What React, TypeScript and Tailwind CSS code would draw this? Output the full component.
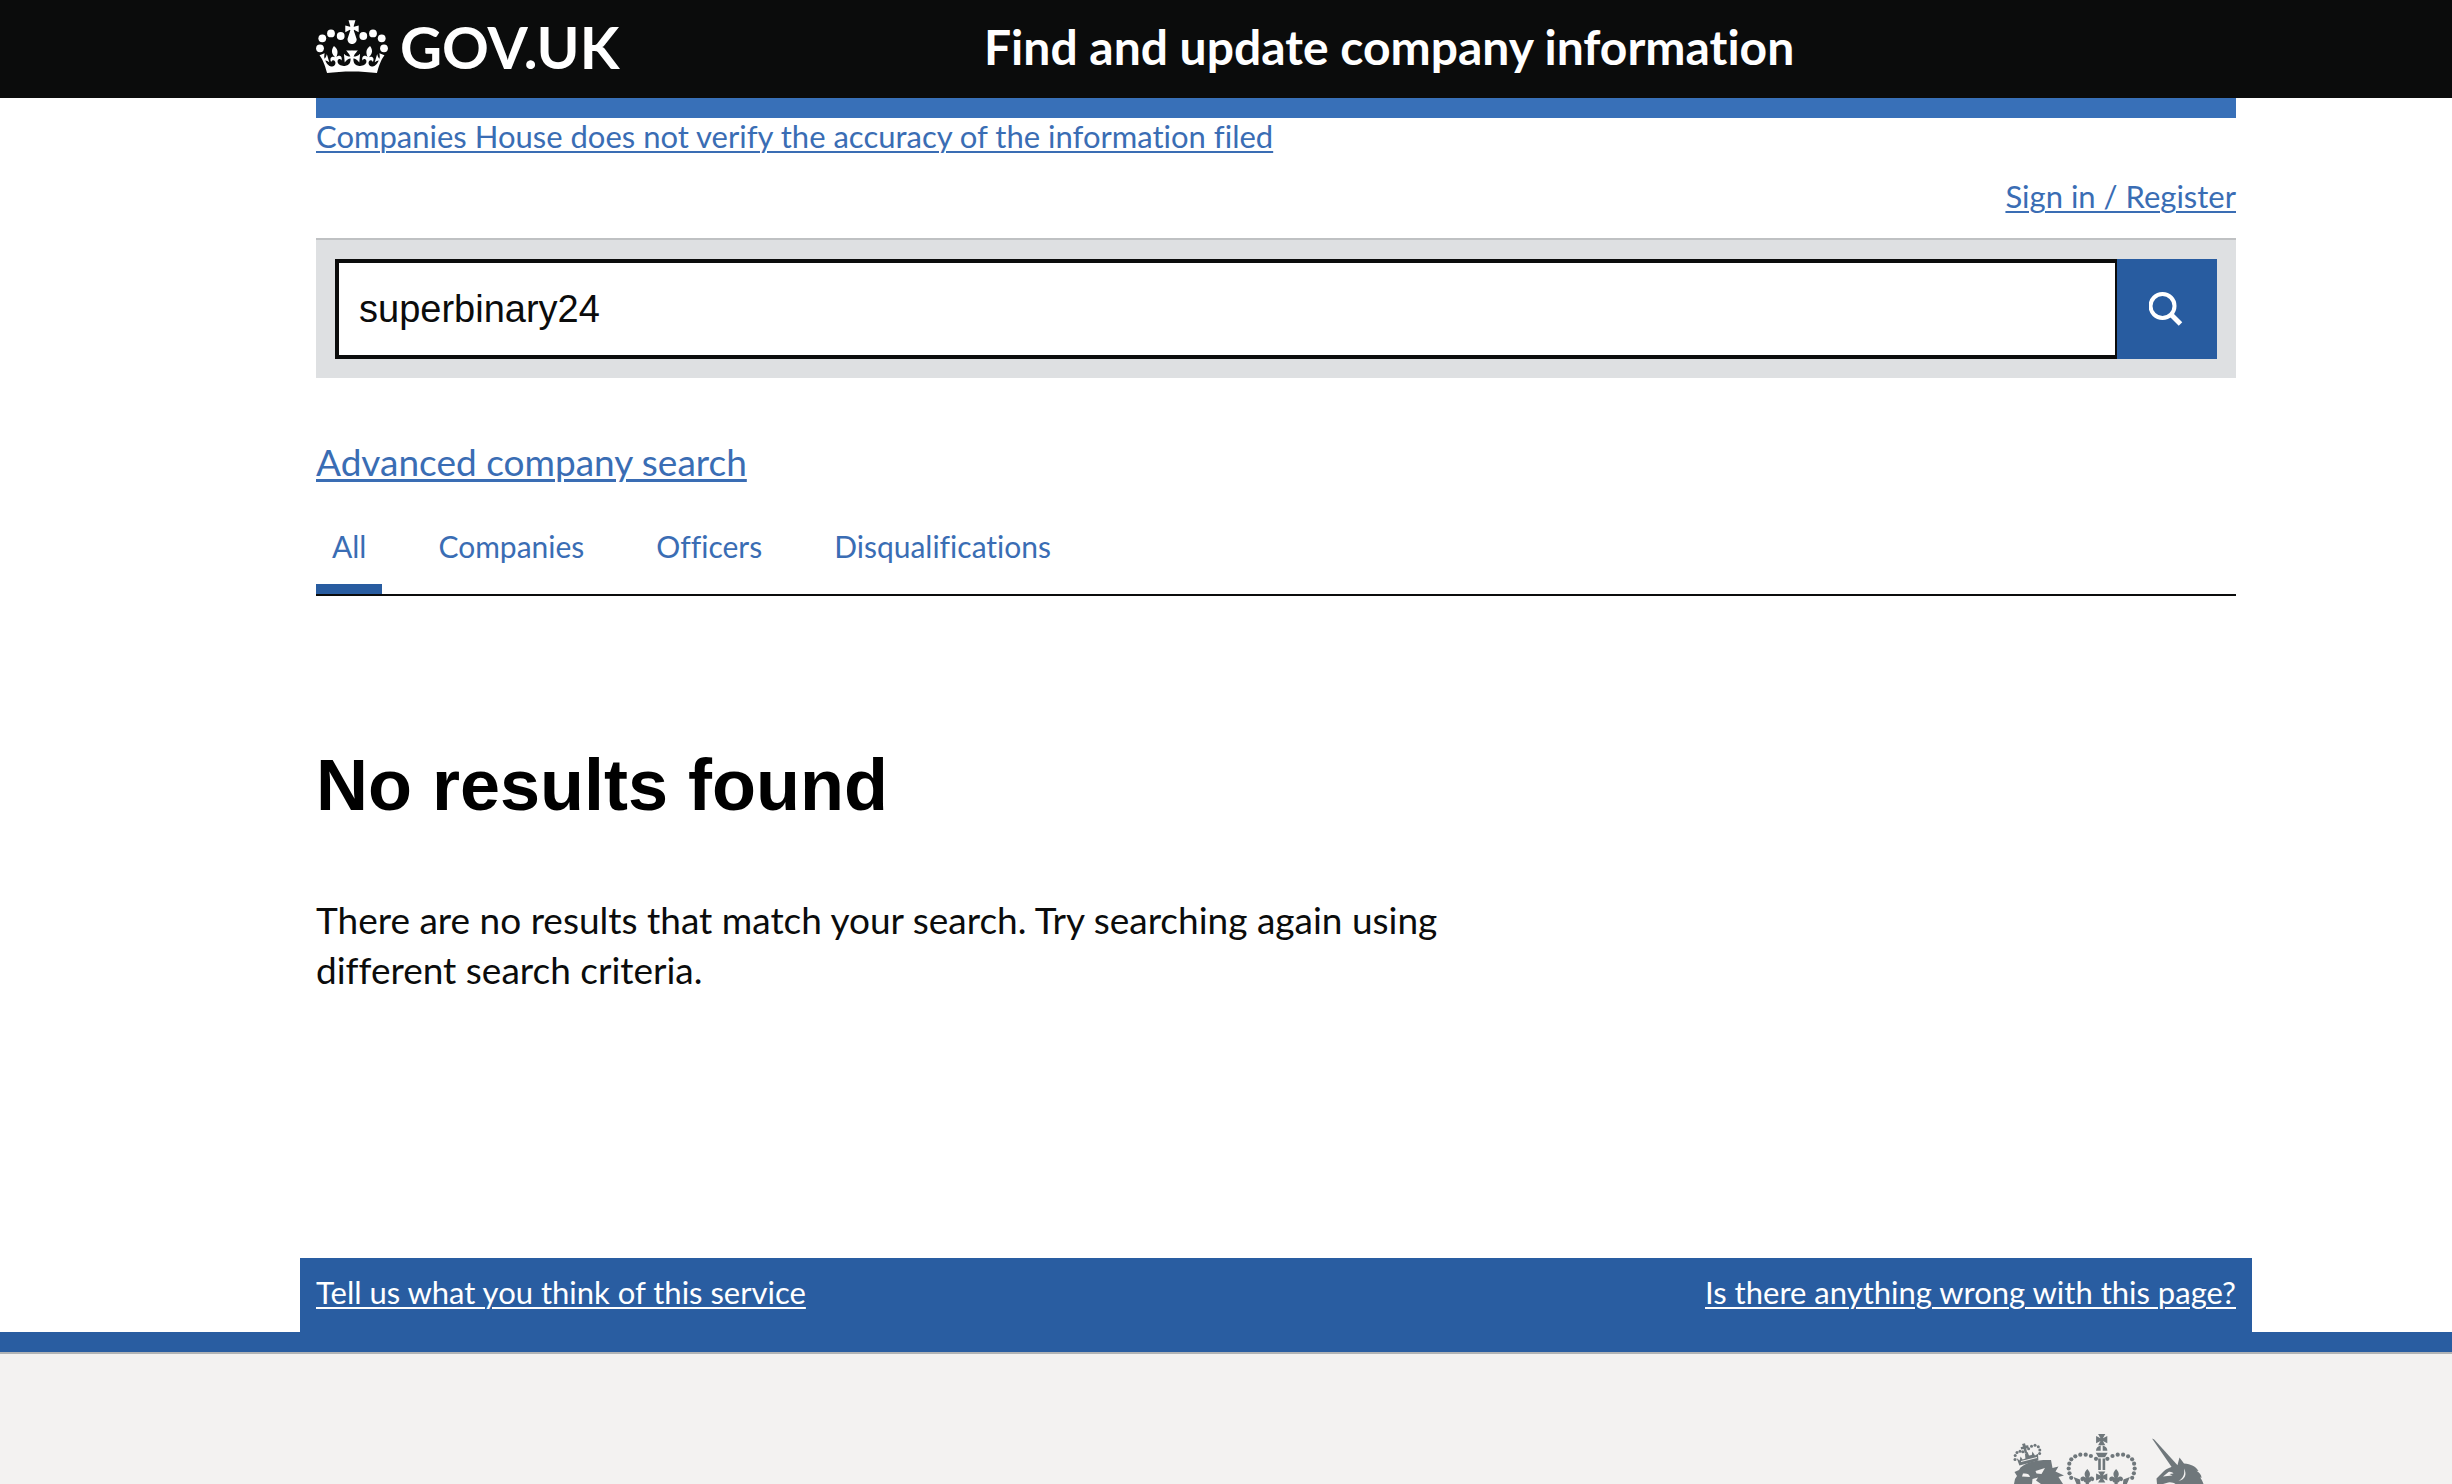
import React, { useState } from 'react';
import { clsx } from 'clsx';

const tabs = ['All', 'Companies', 'Officers', 'Disqualifications'];

const linkClass = 'text-[#3a6db4] underline underline-offset-3';

type ContainerProps = {
  className?: string;
  children: React.ReactNode;
};

function Container({ className, children }: ContainerProps) {
  return <div className={clsx('pl-[316px] pr-[216px]', className)}>{children}</div>;
}

function Crown() {
  const dots = [
    [4, 28.3],
    [6.3, 18.3],
    [15, 13.4],
    [24.7, 16],
  ];
  // right half of the rim, mirrored below for the left
  const rim =
    'M16 29.2c4.4 0 8.6.3 12.3.8 1.1-4.5 2.4-7 3.7-8.8l-2.5-.9c.2 1.3.3 1.9 0 2.7-.4-.4-.8-1.1-1.1-2.3l-1.2 4c.7-.5 1.3-.8 2-.9-1.1 2.5-2.6 3.1-3.5 3-1.1-.2-1.7-1.2-1.5-2.1.3-1.2 1.5-1.5 2.1-.1 1.1-2.3-.8-3-2-2.3 1.9-1.9 2.1-3.5.6-5.6-2.1 1.6-2.1 3.2-1.2 5.5-1.2-1.4-3.2-.6-2.5 1.6.9-1.4 2.1-.5 1.9.8-.2 1.1-1.7 2.1-3.5 1.9-2.7-.2-2.9-2.1-2.9-3.6.7-.1 1.9.5 2.9 1.9l.4-4.3c-1.1 1.1-2.1 1.4-3.2 1.4.4-1.2 2.1-3 2.1-3H15.9z';

  return (
    <svg viewBox="0 0 72 54" className="h-[54px] w-[72px] fill-white" aria-hidden="true">
      {dots.map(([x, y]) => (
        <g key={x}>
          <circle cx={x} cy={y} r="3.9" />
          <circle cx={72 - x} cy={y} r="3.9" />
        </g>
      ))}
      <path
        transform="translate(3.5 .3) scale(2.03)"
        d="M17 4.7l2.3 1.2V2.5l-2.3.7-.2-.2.9-3h-3.4l.9 3-.2.2-2.3-.7v3.4L15 4.7l.2.2-1.3 4c-.1.2-.1.4-.1.6 0 1.1.8 2 1.9 2.2h.7c1-.2 1.9-1.1 1.9-2.1 0-.2 0-.4-.1-.6l-1.3-4z"
      />
      <path transform="translate(3.5 -7.9) scale(2.03)" d={rim} />
      <path transform="translate(68.5 -7.9) scale(-2.03 2.03)" d={rim} />
    </svg>
  );
}

function SearchIcon() {
  return (
    <svg viewBox="0 0 36 36" className="size-9 fill-none stroke-white" aria-hidden="true">
      <circle cx="13.5" cy="15" r="12" strokeWidth="4" />
      <path d="M22 23.5 31.5 33" strokeWidth="5" />
    </svg>
  );
}

function RoyalArms() {
  const arch = [
    [86, 28.8],
    [80.9, 26],
    [75.7, 24.7],
    [70.3, 24.7],
    [65.3, 26.3],
    [61.3, 29.3],
    [59.3, 33.7],
    [58.7, 38.5],
    [59.5, 43.3],
    [61.2, 47.8],
  ];
  const lionPearls = [
    [5, 29.5],
    [5.2, 25.6],
    [7, 22.6],
    [10, 21.2],
    [12.8, 21.8],
    [18.6, 18.8],
    [21.5, 16.2],
    [25, 15.2],
    [28.3, 16.8],
    [29.8, 20],
    [29.6, 23.6],
  ];
  const cross =
    'M-3.6-5.6h7.2L1.2-1.4 5.6-3.6v7.2L1.2 1.4 3.6 5.6h-7.2L-1.2 1.4l-4.4 2.2v-7.2l4.4 2.2z';
  const fleur =
    'M0-9c3.4 3.6 3.2 6 1.4 9 2.2-2.8 6-1.6 5.4 1.6-.4 1.8-2.2 2-3 .8-.4 1.4-1.4 2-2.2 2.2v3h-3.2v-3c-.8-.2-1.8-.8-2.2-2.2-.8 1.2-2.6 1-3-.8C-7.4-1.6-3.6-2.8-1.4 0-3.2-3-3.4-5.4 0-9z';

  return (
    <svg viewBox="0 0 200 54" className="h-[54px] w-[200px] fill-[#6f777b]" aria-hidden="true">
      {/* lion */}
      {lionPearls.map(([x, y]) => (
        <circle key={`${x}-${y}`} cx={x} cy={y} r="1.5" />
      ))}
      <path d="M12 14l3-.8.6 2.4 2.6-.4.4 2.6-2.4.6 1 4.6-2.4.6-1.2-4.6-2.4.6-.6-2.4 2.4-.8z" />
      <path d="M6.6 28l3 2.4 1-4 2 3.2 2.8-1.2-.4-4.4 2.6-2 1.4 3.4 2.8-.4.6-3.4 2.6 3.8 3-1.6.4 6.8-19 5z" />
      <path d="M11 31.5l16-4" fill="none" stroke="#f3f2f1" strokeWidth="1" />
      <path d="M10.5 37.5C17 32 27 29.5 41 30l1.5 8 6-1.5-3 5 8.5 4-5.5 1.5 4.5 7H4l1-5 2-3-2.5-4 4.5-2z" />
      <path
        fill="#f3f2f1"
        d="M13 43.5c4-.5 6.5.5 7 3.500l-8-.5zM25.500 41l9.500-3-3.500 6-5-.5zM22.500 49l5.500-1.500-2 3 5 3.500h-9z"
      />
      {/* crown */}
      {arch.map(([x, y]) => (
        <g key={x}>
          <circle cx={x} cy={y} r="2.1" />
          <circle cx={183.4 - x} cy={y} r="2.1" />
        </g>
      ))}
      <path transform="translate(91.7 9.6)" d={cross} />
      <path d="M90.7 15.5v5.2H86c0-2.6 2-4.7 4.7-5.2zM92.7 15.5v5.2h4.7c0-2.6-2-4.7-4.7-5.2zM85.7 22.7h12l-2.7 4.6h-6.6zM88.2 28.5h2.6V40h-2.6zM92.6 28.5h2.6V40h-2.6z" />
      <path transform="translate(91.7 47)" d={cross} />
      <path transform="translate(77.3 48)" d={fleur} />
      <path transform="translate(106.1 48)" d={fleur} />
      <path d="M63.5 47l6.500 2.500.5 4.500h-4zM119.900 47l-6.500 2.500-.5 4.500h4z" />
      {/* unicorn */}
      <path d="M142 8.6l2.2.8 23.6 26.2-5 3.2z" />
      <path d="M146.5 48.5l7-7c3-3 7-4.5 14-6.5l2-7.500 4.500 6c7 .5 12 3 14.500 7.500l-2-.2c3 2 5 4.200 5 7.200l-1.500-.8c1.500 1.800 2.500 3.800 3.500 6.800h-28c-2-1.500-6-2.500-9-1l-3.500 1h-6z" />
      <path
        fill="#f3f2f1"
        d="M153 46.5l5.500-4.500c2.500-.5 4 .5 5 1.500l-4 .5 3 1.500-5 .5zM174 38.500c1 6-1 10-5.500 12.500 7-1.500 8.500-7 5.500-12.500z"
      />
    </svg>
  );
}

function Header() {
  return (
    <header className="bg-[#0b0c0c] text-white">
      <Container className="flex items-center pt-[18px] pb-[22px] font-bold leading-[58px]">
        <a href="#" className="flex w-[668px] shrink-0 items-center gap-3 text-[58px]">
          <Crown />
          GOV.UK
        </a>
        <a href="#" className="text-5xl leading-[58px]">
          Find and update company information
        </a>
      </Container>
    </header>
  );
}

function SearchForm() {
  const [query, setQuery] = useState('superbinary24');

  return (
    <form
      className="mt-6 flex border-t-2 border-[#bfc1c3] bg-[#dee0e2] p-[19px]"
      onSubmit={(e) => e.preventDefault()}
    >
      <input
        type="text"
        aria-label="Search for a company or officer"
        value={query}
        onChange={(e) => setQuery(e.target.value)}
        className="h-[100px] min-w-0 flex-1 border-4 border-r-2 border-[#0b0c0c] bg-white px-5 font-['Liberation_Sans',Arial,sans-serif] text-[38px] text-[#0b0c0c] outline-none"
      />
      <button
        type="submit"
        aria-label="Search"
        className="flex size-[100px] items-center justify-center bg-[#285ca0]"
      >
        <SearchIcon />
      </button>
    </form>
  );
}

function Tabs() {
  const [active, setActive] = useState('All');

  return (
    <nav className="mt-10 flex gap-10 border-b-2 border-[#0b0c0c]">
      {tabs.map((tab) => (
        <a
          key={tab}
          href="#"
          onClick={() => setActive(tab)}
          className={clsx(
            'border-b-10 px-4 pb-[18px] text-[30px] leading-10 text-[#3a6db4]',
            tab === active ? 'border-[#285ca0]' : 'border-transparent'
          )}
        >
          {tab}
        </a>
      ))}
    </nav>
  );
}

export default function App() {
  return (
    <div className="flex min-h-screen flex-col bg-white font-[Lato,sans-serif] text-[#0b0c0c] [font-variant-ligatures:none]">
      <Header />

      <Container>
        <div className="h-5 bg-[#3870b8]" />
        <div className="flex flex-col text-[31px] leading-9">
          <a href="#" className={clsx(linkClass, 'self-start decoration-2')}>
            Companies House does not verify the accuracy of the information filed
          </a>
          <a href="#" className={clsx(linkClass, 'mt-6 self-end decoration-2')}>
            Sign in / Register
          </a>
        </div>

        <SearchForm />

        <div className="mt-[60px] text-[37px] leading-12">
          <a href="#" className={clsx(linkClass, 'decoration-3')}>
            Advanced company search
          </a>
        </div>
        <Tabs />

        <main className="pt-[149px] pb-[263px]">
          <h1 className="font-['Liberation_Sans',Arial,sans-serif] text-7xl leading-20 font-bold text-black">
            No results found
          </h1>
          <p className="mt-[70px] w-3/5 text-[37px] leading-[50px]">
            There are no results that match your search. Try searching again using different search
            criteria.
          </p>
        </main>

        <div className="-mx-4 flex justify-between bg-[#295da1] px-4 pt-4 pb-[22px] text-[31px] leading-9 text-white">
          <a href="#" className="underline decoration-2 underline-offset-3">
            Tell us what you think of this service
          </a>
          <a href="#" className="underline decoration-2 underline-offset-3">
            Is there anything wrong with this page?
          </a>
        </div>
      </Container>

      <footer className="flex-1 border-t-20 border-[#295da1] bg-[#f3f2f1]">
        <div className="border-t-2 border-[#b1b4b6]">
          <Container className="flex justify-end pt-[76px]">
            <div className="mr-[26px]">
              <RoyalArms />
            </div>
          </Container>
        </div>
      </footer>
    </div>
  );
}
